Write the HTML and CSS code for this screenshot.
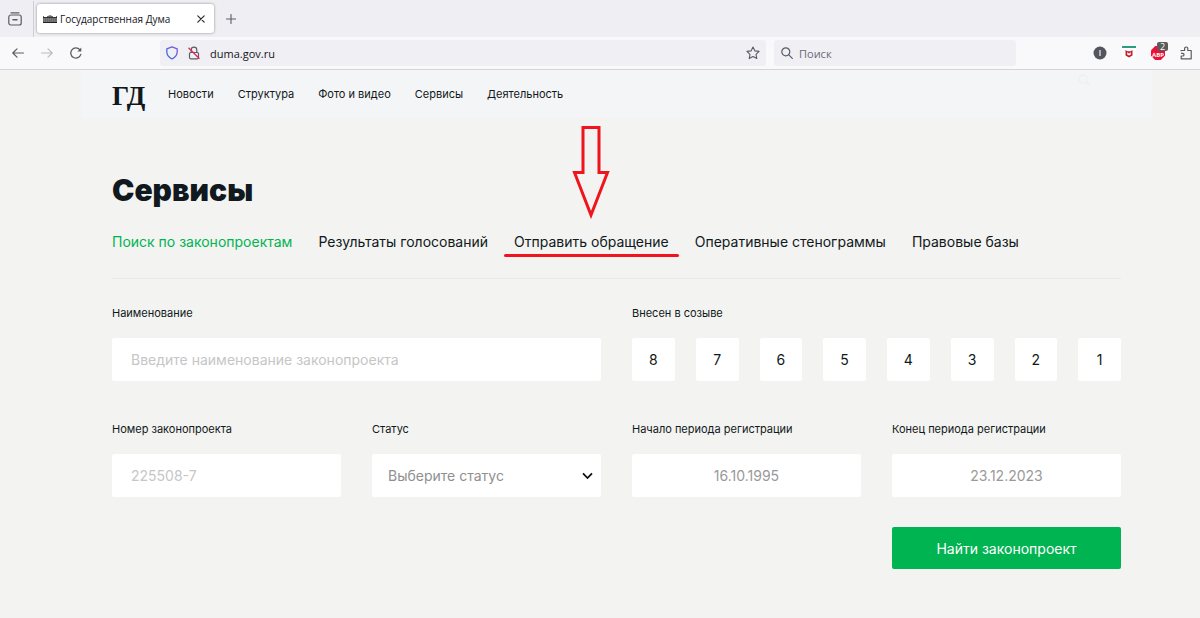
FILE: index.html
```html
<!DOCTYPE html>
<html lang="ru">
<head>
<meta charset="utf-8">
<meta name="viewport" content="width=device-width, initial-scale=1">
<title>Государственная Дума</title>
<link rel="stylesheet" href="styles.css">
</head>
<body>
<div class="browser">
  <div class="tabstrip">
    <button class="icon-btn view-btn" aria-label="Обзор вкладок">
      <svg width="14" height="14" viewBox="0 0 14 14" fill="none" stroke="#5b5b66" stroke-width="1.2" stroke-linecap="round"><path d="M3 .8h8"/><rect x=".8" y="3" width="12.4" height="10" rx="2"/><path d="M5 7.800h4" stroke-width="1.500"/></svg>
    </button>
    <div class="tab">
      <svg width="14" height="8" viewBox="0 0 14 8"><path d="M0 1h1v1h3V1h1l2-1 2 1h1v1h3V1h1v7H0z" fill="#6b6b6b"/><path d="M0 2.500h14" stroke="#333"/><path d="M1 4h12M1 6h12" stroke="#999" stroke-width=".7" stroke-dasharray="1 1"/><path d="M0 7.5h14" stroke="#222"/></svg>
      <span class="tab-title">Государственная Дума</span>
      <button class="icon-btn" aria-label="Закрыть вкладку">
        <svg width="8" height="8" viewBox="0 0 8 8" stroke="#2b2a33" stroke-width="1.2" stroke-linecap="round"><path d="M.8.8l6.4 6.4M7.2.8L.8 7.2"/></svg>
      </button>
    </div>
    <button class="icon-btn" aria-label="Новая вкладка">
      <svg width="10" height="10" viewBox="0 0 10 10" stroke="#5b5b66" stroke-width="1.1" stroke-linecap="round"><path d="M5 .5v9M.5 5h9"/></svg>
    </button>
  </div>
  <div class="toolbar">
    <div class="history">
      <button class="icon-btn" aria-label="Назад"><svg width="12" height="10" viewBox="0 0 12 10" fill="none" stroke="#5b5b66" stroke-width="1.2" stroke-linecap="round" stroke-linejoin="round"><path d="M11.4 5H.8M5 .8L.8 5 5 9.2"/></svg></button>
      <button class="icon-btn" aria-label="Вперёд" disabled><svg width="12" height="10" viewBox="0 0 12 10" fill="none" stroke="#bcbcc2" stroke-width="1.2" stroke-linecap="round" stroke-linejoin="round"><path d="M.6 5h10.6M7 .8L11.200 5 7 9.200"/></svg></button>
      <button class="icon-btn" aria-label="Обновить"><svg width="12" height="12" viewBox="0 0 12 12" fill="none" stroke="#5b5b66" stroke-width="1.3" stroke-linecap="round"><path d="M10.800 7.400A5.100 5.100 0 1 1 9.800 2.700"/><path d="M11.300.6v3.900H7.400z" fill="#5b5b66" stroke="none"/></svg></button>
    </div>
    <div class="address">
      <svg width="12" height="14" viewBox="0 0 12 14" fill="none" stroke="url(#shield)" stroke-width="1.300" stroke-linejoin="round"><defs><linearGradient id="shield" x1="0" y1="1" x2="1" y2="0"><stop offset="0" stop-color="#2f6fe0"/><stop offset="1" stop-color="#7a58e0"/></linearGradient></defs><path d="M6 .9l5.200 1.900v2.800c0 3.300-1.700 5.900-5.200 7.400C2.500 11.500.8 8.900.8 5.600V2.800z"/></svg>
      <svg width="14" height="14" viewBox="0 0 14 14" fill="none" stroke="#5b5b66" stroke-width="1.200"><rect x="2.500" y="6.500" width="9" height="6.300" rx="1.200"/><path d="M4.200 6.500V4a2.800 2.800 0 0 1 5.600 0v2.500"/><path d="M1.500 1.700l11 11" stroke="#e22850" stroke-width="1.300"/></svg>
      <input class="url" type="text" aria-label="Адрес" value="duma.gov.ru">
      <svg width="14" height="14" viewBox="0 0 14 14" fill="none" stroke="#5b5b66" stroke-width="1.100" stroke-linejoin="round"><path d="M7 1l1.850 3.850 4.250.55-3.100 2.950.8 4.200L7 10.500l-3.800 2.050.8-4.200L.9 5.400l4.250-.55z"/></svg>
    </div>
    <label class="searchbar">
      <svg width="12" height="12" viewBox="0 0 12 12" fill="none" stroke="#5b5b66" stroke-width="1.200" stroke-linecap="round"><circle cx="4.800" cy="4.800" r="4"/><path d="M7.800 7.800l3.500 3.500"/></svg>
      <input type="text" aria-label="Поиск в интернете" placeholder="Поиск">
    </label>
    <div class="extensions">
      <button class="icon-btn" aria-label="Аккаунт"><svg width="14" height="14" viewBox="0 0 14 14"><circle cx="7" cy="7" r="6.500" fill="#55555f"/><path d="M7 4v6" stroke="#e4e4ea" stroke-width="1.300"/></svg></button>
      <button class="icon-btn" aria-label="Защита"><svg width="14" height="14" viewBox="0 0 14 14"><path d="M0 0h14v14H0z" fill="#fff"/><path d="M0 0h14v2H0z" fill="#2b9c80"/><path d="M3.500 4l2 1.300h3L10.500 4v5.500L7 11.500 3.500 9.500z" fill="#c8202f"/><path d="M5.200 6.300L7 7.500l1.800-1.200v2.300L7 9.600 5.200 8.600z" fill="#fff"/></svg></button>
      <button class="icon-btn abp" aria-label="Adblock Plus"><svg width="14" height="14" viewBox="0 0 14 14"><path d="M4.200 0h5.600L14 4.200v5.600L9.800 14H4.200L0 9.800V4.200z" fill="#ed1137"/></svg><span class="abp-name">ABP</span><span class="abp-badge">2</span></button>
      <button class="icon-btn" aria-label="Расширения"><svg width="13" height="14" viewBox="0 0 13 14" fill="none" stroke="#5b5b66" stroke-width="1.200" stroke-linejoin="round"><path d="M1 5.200V4.500h3.600V2.600a1.600 1.600 0 0 1 3.200 0v1.900h3.400v8.300H1.200V10h1.500a1.300 1.300 0 0 0 0-2.600H1"/></svg></button>
    </div>
  </div>
</div>

<header class="site-header">
  <a class="logo" href="#" aria-label="Государственная Дума">ГД</a>
  <nav class="main-nav">
    <a href="#">Новости</a>
    <a href="#">Структура</a>
    <a href="#">Фото и видео</a>
    <a href="#">Сервисы</a>
    <a href="#">Деятельность</a>
  </nav>
  <svg class="ghost-search" width="12" height="12" viewBox="0 0 12 12" fill="none" stroke="#eeeff1" stroke-width="1.300"><circle cx="5" cy="5" r="4"/><path d="M8 8l3.500 3.500"/></svg>
</header>

<main class="services">
  <h1>Сервисы</h1>
  <nav class="service-tabs">
    <a class="active" href="#">Поиск по законопроектам</a>
    <a href="#">Результаты голосований</a>
    <a class="marked" href="#">Отправить обращение
      <svg class="arrow" width="38" height="94" viewBox="0 0 38 94" fill="none" stroke="#f0141e" stroke-width="3"><path d="M11 2.500h16v45h8.500L19 90 2.500 47.500H11z"/></svg>
    </a>
    <a href="#">Оперативные стенограммы</a>
    <a href="#">Правовые базы</a>
  </nav>
  <form class="search-form">
    <div class="field wide">
      <label for="name">Наименование</label>
      <input id="name" type="text" placeholder="Введите наименование законопроекта">
    </div>
    <div class="field wide" role="group" aria-labelledby="conv">
      <span class="label" id="conv">Внесен в созыве</span>
      <div class="convocations">
        <button type="button">8</button>
        <button type="button">7</button>
        <button type="button">6</button>
        <button type="button">5</button>
        <button type="button">4</button>
        <button type="button">3</button>
        <button type="button">2</button>
        <button type="button">1</button>
      </div>
    </div>
    <div class="field">
      <label for="number">Номер законопроекта</label>
      <input id="number" type="text" placeholder="225508-7">
    </div>
    <div class="field">
      <label for="status">Статус</label>
      <div class="select">
        <select id="status"><option>Выберите статус</option></select>
        <svg width="11" height="8" viewBox="0 0 11 8" fill="none" stroke="#111" stroke-width="1.800"><path d="M1 1.300l4.500 4.700L10 1.300"/></svg>
      </div>
    </div>
    <div class="field">
      <label for="from">Начало периода регистрации</label>
      <input id="from" class="date" type="text" value="16.10.1995">
    </div>
    <div class="field">
      <label for="to">Конец периода регистрации</label>
      <input id="to" class="date" type="text" value="23.12.2023">
    </div>
    <button class="submit" type="button">Найти законопроект</button>
  </form>
</main>
</body>
</html>
```

FILE: styles.css
```css
* { box-sizing: border-box; }

body {
  margin: 0;
  background: #f3f3f1;
  color: #101820;
  font-family: Inter, "Noto Sans", sans-serif;
}

button, input, select { font: inherit; color: inherit; border: 0; margin: 0; padding: 0; }
a { color: inherit; text-decoration: none; }
svg { display: block; flex: none; }

/* Browser window */
.browser { font-family: "Open Sans", "Noto Sans", sans-serif; }
.icon-btn { display: flex; align-items: center; justify-content: center; background: none; flex: none; }

.tabstrip {
  display: flex;
  align-items: center;
  height: 37px;
  background: #efeef3;
}
.view-btn { width: 34px; height: 36px; padding-right: 4px; border-right: 1px solid #cfced6; }
.tab {
  display: flex;
  align-items: center;
  gap: 3px;
  width: 177px;
  height: 29px;
  margin: 0 12px 0 3px;
  padding: 0 9px 0 6px;
  border-radius: 3px;
  background: #fff;
  box-shadow: 0 0 3px rgba(0, 0, 0, .4);
}
.tab-title { flex: 1; font-size: 10px; white-space: nowrap; color: #15141a; }

.toolbar {
  display: flex;
  align-items: center;
  height: 33px;
  padding: 0 7px 0 12px;
  background: #f9f9fb;
  border-bottom: 1px solid #d5d5d9;
}
.history { display: flex; gap: 17px; width: 148px; }
.address, .searchbar {
  display: flex;
  align-items: center;
  height: 26px;
  border-radius: 3px;
  background: #f0eff4;
}
.address { flex: 5 1 0; gap: 9px; padding: 0 6px; }
.address .url { flex: 1; min-width: 0; background: none; font-size: 11px; color: #15141a; }
.searchbar { flex: 2 1 0; max-width: 242px; gap: 6px; margin-left: 8px; padding: 0 7px; }
.searchbar input { flex: 1; min-width: 0; background: none; font-size: 11px; }
.searchbar input::placeholder { color: #6b6a73; opacity: 1; }
.extensions { display: flex; gap: 15px; margin-left: 77px; }
.abp { position: relative; }
.abp-name {
  position: absolute;
  inset: 6px 0 0;
  font-size: 6px;
  font-weight: 700;
  line-height: 6px;
  text-align: center;
  color: #fff;
}
.abp-badge {
  position: absolute;
  top: -4px;
  right: -3px;
  width: 11px;
  height: 9px;
  border-radius: 2px;
  background: #5b5b5b;
  color: #fff;
  font-size: 9px;
  line-height: 9px;
  text-align: center;
}

/* Site header */
.site-header {
  display: flex;
  align-items: center;
  height: 48px;
  margin: 0 48px 0 81px;
  padding: 0 62px 0 31px;
  background: #f4f5f7;
}
.logo {
  width: 56px;
  padding-top: 4px;
  font-family: "Liberation Serif", serif;
  font-size: 27px;
  font-weight: 700;
  line-height: 36px;
}
.main-nav { display: flex; flex: 1; gap: 24px; font-size: 11px; white-space: nowrap; }
.ghost-search { align-self: flex-start; margin-top: 4px; }

/* Services */
.services { padding: 50px 79px 48px 112px; }
h1 { margin: 0; font-size: 30px; font-weight: 900; line-height: 44px; }
.service-tabs {
  display: flex;
  gap: 26px;
  padding: 20px 0 26px;
  border-bottom: 1px solid #e9e9e8;
  font-size: 14px;
  line-height: 20px;
  white-space: nowrap;
}
.active { color: #00b451; }
.marked { position: relative; }
.marked::after {
  content: "";
  position: absolute;
  left: -10px;
  right: -10px;
  top: 22px;
  height: 3px;
  border-radius: 2px;
  background: #f0141e;
}
.arrow { position: absolute; left: 50%; bottom: 33px; transform: translateX(-50%); }

.search-form {
  display: grid;
  grid-template-columns: repeat(4, minmax(0, 1fr));
  gap: 30px 31px;
  padding-top: 24px;
}
.field { display: flex; flex-direction: column; gap: 15px; }
.wide { grid-column: span 2; padding-bottom: 8px; }
.field label, .label { font-size: 11px; line-height: 20px; white-space: nowrap; }
.field input, .select select, .convocations button {
  width: 100%;
  height: 43px;
  border-radius: 2px;
  background: #fff;
  font-size: 14px;
}
.field input { padding: 0 19px; }
.field input::placeholder { color: #c6c6c6; opacity: 1; }
.field input.date { text-align: center; color: #999; }
.convocations { display: flex; gap: 21px; }
.convocations button { flex: 1; min-width: 0; }
.select { display: grid; align-items: center; }
.select select, .select svg { grid-area: 1 / 1; }
.select select { appearance: none; padding: 0 32px 0 16px; color: #8f8f8f; }
.select svg { justify-self: end; margin-right: 8px; pointer-events: none; }
.submit {
  grid-column: 4;
  height: 42px;
  border-radius: 2px;
  background: #00b451;
  color: #fff;
  font-size: 14px;
}
```
